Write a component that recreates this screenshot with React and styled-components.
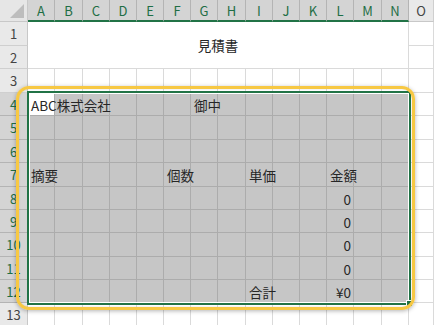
import React from "react";
import styled, { createGlobalStyle } from "styled-components";

const Global = createGlobalStyle`
  html, body { margin: 0; padding: 0; background: #fff; overflow: hidden; }
  body { font-family: "Noto Sans CJK JP", "Noto Sans", sans-serif; }
`;

const colWidths = [28, 27, 28, 27, 27, 27, 27, 27, 28, 27, 27, 27, 27, 28, 27, 25];
const rowHeights = [22, 24, 23, 24, 23, 24, 23, 24, 23, 23, 24, 23, 23, 24];
const letters = "ABCDEFGHIJKLMNO".split("");

const Sheet = styled.div`
  position: relative;
  width: 434px;
  height: 325px;
  overflow: hidden;
  display: grid;
  grid-template-columns: ${colWidths.map((w) => w + "px").join(" ")};
  grid-template-rows: ${rowHeights.map((h) => h + "px").join(" ")};
  font-family: "Noto Sans CJK JP", "Noto Sans", sans-serif;
`;

const Corner = styled.div`
  background: #e6e6e6;
  border-right: 1px solid #c8c8c8;
  border-bottom: 1px solid #c8c8c8;
  box-sizing: border-box;
  display: flex;
  align-items: flex-end;
  justify-content: flex-end;
  padding: 0 3px 3px 0;
  svg { display: block; }
`;

const ColHead = styled.div`
  box-sizing: border-box;
  background: ${(p) => (p.$sel ? "#d4d4d4" : "#e9e9e9")};
  color: ${(p) => (p.$sel ? "#1e6e45" : "#444")};
  border-right: 1px solid ${(p) => (p.$sel ? "#b4b4b4" : "#cfcfcf")};
  border-bottom: ${(p) => (p.$sel ? "2px solid #217346" : "1px solid #c8c8c8")};
  display: flex;
  align-items: center;
  justify-content: center;
  font-size: 13px;
  padding-top: ${(p) => (p.$sel ? "1px" : "0")};
`;

const RowHead = styled.div`
  box-sizing: border-box;
  background: ${(p) => (p.$sel ? "#d4d4d4" : "#e9e9e9")};
  color: ${(p) => (p.$sel ? "#1e6e45" : "#444")};
  border-right: 1px solid ${(p) => (p.$sel ? "#217346" : "#c8c8c8")};
  border-bottom: 1px solid ${(p) => (p.$sel ? "#b4b4b4" : "#cfcfcf")};
  display: flex;
  align-items: center;
  justify-content: center;
  font-size: 13px;
`;

const Cell = styled.div`
  box-sizing: border-box;
  background: ${(p) => (p.$active ? "#fff" : p.$sel ? "#c6c6c6" : "#fff")};
  border-right: 1px solid ${(p) => (p.$sel ? "#acacac" : "#dadada")};
  border-bottom: 1px solid ${(p) => (p.$sel ? "#acacac" : "#dadada")};
  display: flex;
  align-items: center;
  justify-content: ${(p) => (p.$align === "right" ? "flex-end" : "flex-start")};
  padding: 1px 2px 0 3px;
  font-size: 13.5px;
  color: #262626;
  white-space: nowrap;
  overflow: visible;
  min-width: 0;
`;

const CellText = styled.span`
  position: relative;
  z-index: 1;
`;

const Title = styled(Cell)`
  grid-column: span 14;
  grid-row: span 2;
  justify-content: center;
  padding: 0;
`;

const Selection = styled.div`
  position: absolute;
  left: 27px;
  top: 91px;
  width: 384px;
  height: 214px;
  box-sizing: border-box;
  border: 2px solid #217346;
  box-shadow: inset 0 0 0 1px #fff;
  pointer-events: none;
  z-index: 2;
`;

const FillHandle = styled.div`
  position: absolute;
  right: -4px;
  bottom: -4px;
  width: 5px;
  height: 5px;
  background: #217346;
  border: 1px solid #fff;
`;

const Callout = styled.div`
  position: absolute;
  left: 16px;
  top: 86px;
  width: 399px;
  height: 224px;
  box-sizing: border-box;
  border: 3.5px solid #f7c843;
  border-radius: 13px;
  box-shadow: 0 1px 4px rgba(0, 0, 0, 0.3), inset 0 0 2px rgba(0, 0, 0, 0.15);
  pointer-events: none;
  z-index: 3;
`;

const data = {
  "4,1": { text: "ABC株式会社" },
  "4,7": { text: "御中" },
  "7,1": { text: "摘要" },
  "7,6": { text: "個数" },
  "7,9": { text: "単価" },
  "7,12": { text: "金額" },
  "8,12": { text: "0", align: "right" },
  "9,12": { text: "0", align: "right" },
  "10,12": { text: "0", align: "right" },
  "11,12": { text: "0", align: "right" },
  "12,9": { text: "合計" },
  "12,12": { text: "¥0", align: "right" },
};

export default function App() {
  const cells = [];
  cells.push(
    <Corner key="corner">
      <svg width="14" height="14" viewBox="0 0 14 14">
        <polygon points="14,0 14,14 0,14" fill="#bdbdbd" />
      </svg>
    </Corner>
  );
  letters.forEach((l, i) => {
    cells.push(
      <ColHead key={"h" + l} $sel={i < 14}>
        {l}
      </ColHead>
    );
  });
  for (let r = 1; r <= 13; r++) {
    const rowSel = r >= 4 && r <= 12;
    cells.push(
      <RowHead key={"r" + r} $sel={rowSel}>
        {r}
      </RowHead>
    );
    for (let c = 1; c <= 15; c++) {
      if ((r === 1 || r === 2) && c <= 14) {
        if (r === 1 && c === 1) cells.push(<Title key="title">見積書</Title>);
        continue;
      }
      const sel = rowSel && c <= 14;
      const d = data[r + "," + c];
      cells.push(
        <Cell key={r + "-" + c} $sel={sel} $active={r === 4 && c === 1} $align={d && d.align}>
          {d ? <CellText>{d.text}</CellText> : null}
        </Cell>
      );
    }
  }
  return (
    <>
      <Global />
      <Sheet>
        {cells}
        <Selection>
          <FillHandle />
        </Selection>
        <Callout />
      </Sheet>
    </>
  );
}
